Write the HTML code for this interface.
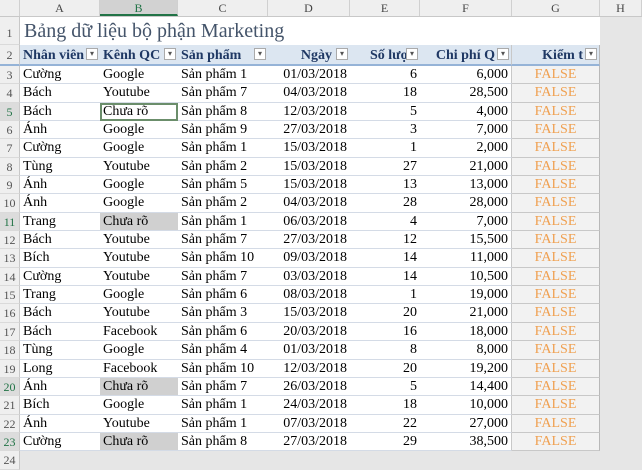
<!DOCTYPE html>
<html><head><meta charset="utf-8"><style>
*{margin:0;padding:0;box-sizing:border-box}
body{width:642px;height:462px;overflow:hidden;background:#e6e6e6;font-family:"Liberation Serif",serif;font-size:14px;color:#000;position:relative}
.r{display:flex;height:18.35px;line-height:18px;white-space:nowrap}
.r>div{overflow:hidden;border-bottom:1px solid #d4dbe6;padding:0 3px}
.h{width:20px;background:#efefef;color:#555;font-size:12px;text-align:center;border-right:1px solid #c8c8c8;padding:0!important;border-bottom:1px solid #dadada!important}
.a{width:80px;background:#fff}.b{width:78px;background:#fff}.c{width:90px;background:#fff}.d{width:82px;background:#fff;text-align:right}.e{width:70px;background:#fff;text-align:right}.f{width:92px;background:#fff;text-align:right;border-right:1px solid #c8c8c8}.g{width:88px;background:#f2f2f2;color:#f0a050;text-align:center;border-bottom:1px solid #c8c8c8!important;border-right:1px solid #b8b8b8}
.gr{background:#d0d0d0!important}
.hl{color:#217346!important;background:#dcdcdc!important}
.top{display:flex;height:17px;line-height:17px;background:#efefef;font-size:12px;color:#444;border-bottom:1px solid #c8c8c8}
.top div{text-align:center;border-right:1px solid #d0d0d0}
.hdr div{background:#dce6f1!important;color:#1f3864;font-weight:bold;border-bottom:2px solid #95b3d7!important;position:relative}
.dd{position:absolute;right:2px;top:3px;width:12px;height:12px;border:1px solid #aaa;background:#fff;font-size:8px;line-height:10px;text-align:center;color:#555;font-weight:normal}
</style></head><body>
<div class="top"><div style="width:20px"></div><div style="width:80px">A</div><div style="width:78px;background:#d2d2d2;border-bottom:2px solid #217346;color:#217346">B</div><div style="width:90px">C</div><div style="width:82px">D</div><div style="width:70px">E</div><div style="width:92px">F</div><div style="width:88px">G</div><div style="width:42px">H</div></div>
<div class="r" style="height:28px;line-height:28px"><div class="h" style="line-height:32px">1</div><div style="width:580px;background:#fff;font-size:20px;color:#44546a;border-bottom:none;padding-left:4px">Bảng dữ liệu bộ phận Marketing</div></div>
<div class="r hdr" style="height:21px;line-height:21px"><div class="h" style="background:#efefef!important;color:#555;font-weight:normal">2</div><div class="a">Nhân viên<span class="dd">▾</span></div><div class="b">Kênh QC<span class="dd">▾</span></div><div class="c">Sản phẩm<span class="dd">▾</span></div><div class="d" style="padding-right:18px">Ngày<span class="dd">▾</span></div><div class="e" style="padding-right:0;text-align:left;padding-left:20px">Số lượ<span class="dd">▾</span></div><div class="f" style="padding-right:16px">Chi phí Q<span class="dd">▾</span></div><div class="g" style="color:#1f3864;padding-right:16px;text-align:right">Kiểm t<span class="dd">▾</span></div></div>
<div class="r"><div class="h">3</div><div class="a">Cường</div><div class="b">Google</div><div class="c">Sản phẩm 1</div><div class="d">01/03/2018</div><div class="e">6</div><div class="f">6,000</div><div class="g">FALSE</div></div>
<div class="r"><div class="h">4</div><div class="a">Bách</div><div class="b">Youtube</div><div class="c">Sản phẩm 7</div><div class="d">04/03/2018</div><div class="e">18</div><div class="f">28,500</div><div class="g">FALSE</div></div>
<div class="r"><div class="h hl">5</div><div class="a">Bách</div><div class="b" style="outline:2px solid #6b8e6b;outline-offset:-2px">Chưa rõ</div><div class="c">Sản phẩm 8</div><div class="d">12/03/2018</div><div class="e">5</div><div class="f">4,000</div><div class="g">FALSE</div></div>
<div class="r"><div class="h">6</div><div class="a">Ánh</div><div class="b">Google</div><div class="c">Sản phẩm 9</div><div class="d">27/03/2018</div><div class="e">3</div><div class="f">7,000</div><div class="g">FALSE</div></div>
<div class="r"><div class="h">7</div><div class="a">Cường</div><div class="b">Google</div><div class="c">Sản phẩm 1</div><div class="d">15/03/2018</div><div class="e">1</div><div class="f">2,000</div><div class="g">FALSE</div></div>
<div class="r"><div class="h">8</div><div class="a">Tùng</div><div class="b">Youtube</div><div class="c">Sản phẩm 2</div><div class="d">15/03/2018</div><div class="e">27</div><div class="f">21,000</div><div class="g">FALSE</div></div>
<div class="r"><div class="h">9</div><div class="a">Ánh</div><div class="b">Google</div><div class="c">Sản phẩm 5</div><div class="d">15/03/2018</div><div class="e">13</div><div class="f">13,000</div><div class="g">FALSE</div></div>
<div class="r"><div class="h">10</div><div class="a">Ánh</div><div class="b">Google</div><div class="c">Sản phẩm 2</div><div class="d">04/03/2018</div><div class="e">28</div><div class="f">28,000</div><div class="g">FALSE</div></div>
<div class="r"><div class="h hl">11</div><div class="a">Trang</div><div class="b gr">Chưa rõ</div><div class="c">Sản phẩm 1</div><div class="d">06/03/2018</div><div class="e">4</div><div class="f">7,000</div><div class="g">FALSE</div></div>
<div class="r"><div class="h">12</div><div class="a">Bách</div><div class="b">Youtube</div><div class="c">Sản phẩm 7</div><div class="d">27/03/2018</div><div class="e">12</div><div class="f">15,500</div><div class="g">FALSE</div></div>
<div class="r"><div class="h">13</div><div class="a">Bích</div><div class="b">Youtube</div><div class="c">Sản phẩm 10</div><div class="d">09/03/2018</div><div class="e">14</div><div class="f">11,000</div><div class="g">FALSE</div></div>
<div class="r"><div class="h">14</div><div class="a">Cường</div><div class="b">Youtube</div><div class="c">Sản phẩm 7</div><div class="d">03/03/2018</div><div class="e">14</div><div class="f">10,500</div><div class="g">FALSE</div></div>
<div class="r"><div class="h">15</div><div class="a">Trang</div><div class="b">Google</div><div class="c">Sản phẩm 6</div><div class="d">08/03/2018</div><div class="e">1</div><div class="f">19,000</div><div class="g">FALSE</div></div>
<div class="r"><div class="h">16</div><div class="a">Bách</div><div class="b">Youtube</div><div class="c">Sản phẩm 3</div><div class="d">15/03/2018</div><div class="e">20</div><div class="f">21,000</div><div class="g">FALSE</div></div>
<div class="r"><div class="h">17</div><div class="a">Bách</div><div class="b">Facebook</div><div class="c">Sản phẩm 6</div><div class="d">20/03/2018</div><div class="e">16</div><div class="f">18,000</div><div class="g">FALSE</div></div>
<div class="r"><div class="h">18</div><div class="a">Tùng</div><div class="b">Google</div><div class="c">Sản phẩm 4</div><div class="d">01/03/2018</div><div class="e">8</div><div class="f">8,000</div><div class="g">FALSE</div></div>
<div class="r"><div class="h">19</div><div class="a">Long</div><div class="b">Facebook</div><div class="c">Sản phẩm 10</div><div class="d">12/03/2018</div><div class="e">20</div><div class="f">19,200</div><div class="g">FALSE</div></div>
<div class="r"><div class="h hl">20</div><div class="a">Ánh</div><div class="b gr">Chưa rõ</div><div class="c">Sản phẩm 7</div><div class="d">26/03/2018</div><div class="e">5</div><div class="f">14,400</div><div class="g">FALSE</div></div>
<div class="r"><div class="h">21</div><div class="a">Bích</div><div class="b">Google</div><div class="c">Sản phẩm 1</div><div class="d">24/03/2018</div><div class="e">18</div><div class="f">10,000</div><div class="g">FALSE</div></div>
<div class="r"><div class="h">22</div><div class="a">Ánh</div><div class="b">Youtube</div><div class="c">Sản phẩm 1</div><div class="d">07/03/2018</div><div class="e">22</div><div class="f">27,000</div><div class="g">FALSE</div></div>
<div class="r"><div class="h hl">23</div><div class="a">Cường</div><div class="b gr">Chưa rõ</div><div class="c">Sản phẩm 8</div><div class="d">27/03/2018</div><div class="e">29</div><div class="f">38,500</div><div class="g">FALSE</div></div>
<div class="r"><div class="h">24</div></div>
</body></html>
